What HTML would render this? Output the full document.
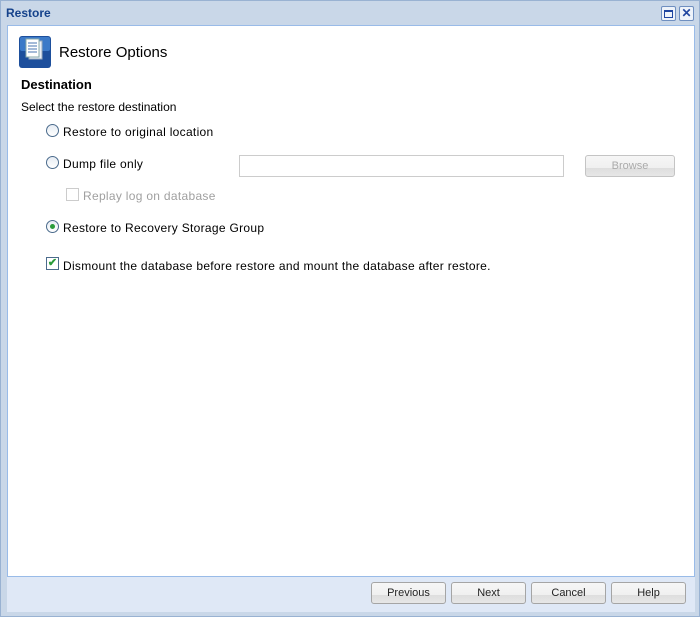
<!DOCTYPE html>
<html><head><style>
body{margin:0;width:700px;height:617px;background:#c9d7e8;font-family:"Liberation Sans",sans-serif;position:relative;overflow:hidden}
.win{position:absolute;left:0;top:0;width:698px;height:615px;border:1px solid #99b2d2;background:#c9d7e8}
.title{position:absolute;left:5px;top:5px;font-weight:bold;font-size:12px;color:#15428b}
.body{position:absolute;left:6px;top:24px;width:686px;height:550px;background:#fff;border:1px solid #99bbe8}
.foot{position:absolute;left:6px;top:576px;width:688px;height:35px;background:#dfe8f6}
.t{position:absolute;font-size:12px;color:#000;white-space:nowrap}
.l{letter-spacing:0.3px;top:0}
.btn{position:absolute;top:582px;width:73px;height:20px;border:1px solid #a5a5a5;border-radius:3px;background:linear-gradient(#f6f6f6 0,#f0f0f0 60%,#dedede 61%,#e6e6e6);font-size:11px;text-align:center;line-height:20px;color:#222}
.radio{position:absolute;width:11px;height:11px;border:1px solid #4b6b8c;border-radius:50%;background:linear-gradient(#e6ecf3,#fff)}
.tb{position:absolute;top:5px;width:13px;height:13px;border:1px solid #6f8fc0;border-radius:2px;background:#eef3fa}
</style></head><body>
<div class="win">
<div class="title">Restore</div>
<div class="tb" style="left:660px"><div style="position:absolute;left:2px;top:3px;width:7px;height:5px;border:1px solid #1f45a0;border-top-width:2px"></div></div>
<div class="tb" style="left:678px;font-size:12px;line-height:13px;text-align:center;color:#1f45a0;font-weight:bold">✕</div>
<div class="body"></div>
<div class="foot"></div>
</div>
<svg style="position:absolute;left:19px;top:36px" width="32" height="32"><rect x="0" y="0" width="32" height="32" rx="3" fill="#1d4f9c"/><rect x="1" y="1" width="30" height="14" rx="2" fill="#3c7ac8"/><rect x="10" y="5" width="13" height="18" fill="#e8eef6" stroke="#9ab" /><rect x="7" y="3" width="13" height="18" fill="#fff" stroke="#8aa"/><g stroke="#4a76b0"><line x1="9" y1="7" x2="18" y2="7"/><line x1="9" y1="10" x2="18" y2="10"/><line x1="9" y1="13" x2="18" y2="13"/><line x1="9" y1="16" x2="18" y2="16"/></g></svg>
<div class="t" style="left:59px;top:44px;font-size:15px">Restore Options</div>
<div class="t" style="left:21px;top:77px;font-size:13px;font-weight:bold">Destination</div>
<div class="t" style="left:21px;top:100px">Select the restore destination</div>
<div class="radio" style="left:46px;top:124px"></div>
<div class="t l" style="left:63px;top:125px">Restore to original location</div>
<div class="radio" style="left:46px;top:156px"></div>
<div class="t l" style="left:63px;top:157px">Dump file only</div>
<div style="position:absolute;left:239px;top:155px;width:323px;height:20px;border:1px solid #ccc;background:#fff"></div>
<div class="btn" style="left:585px;top:155px;width:88px;color:#aaa;border-color:#c4c4c4">Browse</div>
<div style="position:absolute;left:66px;top:188px;width:11px;height:11px;border:1px solid #ccc"></div>
<div class="t l" style="left:83px;top:189px;color:#a0a0a0">Replay log on database</div>
<div class="radio" style="left:46px;top:220px"><div style="position:absolute;left:3px;top:3px;width:5px;height:5px;border-radius:50%;background:#2a9b3a"></div></div>
<div class="t l" style="left:63px;top:221px">Restore to Recovery Storage Group</div>
<div style="position:absolute;left:46px;top:257px;width:11px;height:11px;border:1px solid #4b6b8c;background:#fff;color:#2a9b3a;font-size:11px;line-height:11px;text-align:center;font-weight:bold">✔</div>
<div class="t l" style="left:63px;top:259px">Dismount the database before restore and mount the database after restore.</div>
<div class="btn" style="left:371px">Previous</div>
<div class="btn" style="left:451px">Next</div>
<div class="btn" style="left:531px">Cancel</div>
<div class="btn" style="left:611px">Help</div>
</body></html>
